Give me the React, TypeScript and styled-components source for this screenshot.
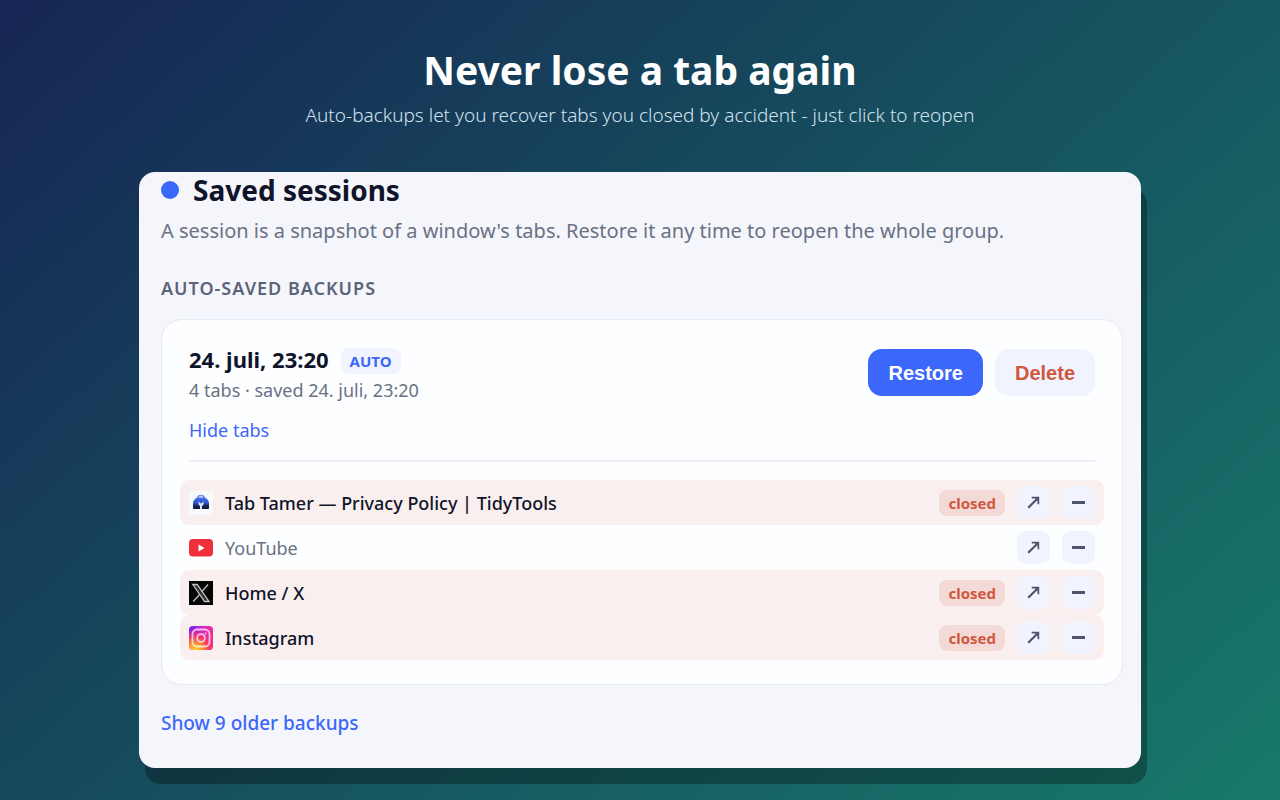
import React from 'react';
import styled, { createGlobalStyle, css } from 'styled-components';

const GlobalStyle = createGlobalStyle`
  * { box-sizing: border-box; }
  html { min-height: 100%; background: linear-gradient(138deg, #162554, #16505e 50%, #17796b) no-repeat; }
  body { margin: 0; color: #10142a; font-family: 'Segoe UI', 'Noto Sans', sans-serif; }
  h1, h2, h3, p, ul { margin: 0; padding: 0; }
  button { font: inherit; border: 0; cursor: pointer; }
`;

const Page = styled.div`
  display: flex;
  flex-direction: column;
  align-items: center;
  gap: 44px;
  padding: 43px 24px 32px;
`;

const Hero = styled.header`
  display: flex;
  flex-direction: column;
  align-items: center;
  gap: 5px;
  text-align: center;
`;

const HeroTitle = styled.h1`
  color: #fff;
  font-size: 39px;
  line-height: 54px;
  font-weight: 700;
`;

const HeroText = styled.p`
  color: #d2e2ee;
  font-size: 19px;
  line-height: 26px;
  font-weight: 300;
`;

const Panel = styled.main`
  width: 100%;
  max-width: 1002px;
  padding: 0 18px 31px 22px;
  border-radius: 16px;
  background: #f5f6fc;
  box-shadow: 6px 16px 0 rgba(0, 0, 0, 0.3);
`;

const PanelTitle = styled.h2`
  display: flex;
  align-items: center;
  gap: 14px;
  font-size: 28px;
  line-height: 36px;
  font-weight: 700;
`;

const Dot = styled.span`
  width: 18px;
  height: 18px;
  border-radius: 50%;
  background: #3b67fa;
`;

const Intro = styled.p`
  padding-top: 8px;
  color: #6a7183;
  font-size: 20px;
  line-height: 30px;
`;

const SectionLabel = styled.h3`
  padding: 30px 0 18px;
  color: #5b6478;
  font-size: 18px;
  line-height: 25px;
  font-weight: 600;
  letter-spacing: 1px;
  text-transform: uppercase;
`;

const Card = styled.section`
  padding: 28px 27px 24px;
  border: 1px solid #e6e8f4;
  border-radius: 21px;
  background: #fdfeff;
`;

const CardHead = styled.div`
  display: flex;
  justify-content: space-between;
  align-items: flex-start;
  padding-bottom: 16px;
  border-bottom: 2px solid #eceef3;
`;

const Summary = styled.div`
  display: flex;
  flex-direction: column;
  align-items: flex-start;
`;

const DateLine = styled.div`
  display: flex;
  align-items: flex-start;
  gap: 12px;
  font-size: 22px;
  line-height: 22px;
  font-weight: 700;
`;

const Badge = styled.span<{ $tone: 'blue' | 'red' }>`
  padding: 0 9px;
  border-radius: 8px;
  font-size: 15px;
  line-height: 26px;
  font-weight: 700;
  ${({ $tone }) =>
    $tone === 'blue'
      ? css`background: #f1f3fe; color: #3b67fa;`
      : css`background: #f3dad7; color: #d0573e;`}
`;

const Meta = styled.p`
  color: #6a7183;
  font-size: 18px;
  line-height: 32px;
`;

const LinkButton = styled.button<{ $strong?: boolean }>`
  padding: 0;
  background: none;
  color: #3b67fa;
  font-size: ${({ $strong }) => ($strong ? 19 : 18)}px;
  font-weight: ${({ $strong }) => ($strong ? 500 : 400)};
  line-height: 28px;
  margin-top: ${({ $strong }) => ($strong ? 24 : 10)}px;
`;

const Actions = styled.div`
  display: flex;
  gap: 12px;
  padding-top: 1px;
`;

const ActionButton = styled.button<{ $primary?: boolean }>`
  height: 47px;
  padding: 0 20px;
  border-radius: 14px;
  background: ${({ $primary }) => ($primary ? '#3b67fa' : '#f1f3fe')};
  color: ${({ $primary }) => ($primary ? '#fff' : '#d0573e')};
  font: 700 20px/24px 'Liberation Sans', Arial, sans-serif;
`;

const TabList = styled.ul`
  margin: 18px -9px 0;
  list-style: none;
`;

const TabRow = styled.li<{ $closed: boolean }>`
  display: flex;
  align-items: center;
  gap: 12px;
  height: 45px;
  padding: 0 9px;
  border-radius: 9px;
  background: ${({ $closed }) => ($closed ? '#f9efee' : 'transparent')};
  color: ${({ $closed }) => ($closed ? '#10142a' : '#6a7183')};
  font-size: 18px;
  font-weight: ${({ $closed }) => ($closed ? 500 : 400)};
`;

const TabName = styled.span`
  flex: 1;
  line-height: 26px;
`;

const IconButton = styled.button`
  display: grid;
  place-items: center;
  width: 33px;
  height: 33px;
  padding: 0;
  border-radius: 9px;
  background: #f1f3fe;
  color: #4c556b;
`;

const Favicon = styled.svg`
  width: 24px;
  height: 24px;
  flex: none;
`;

const TamerIcon = () => (
  <Favicon viewBox="0 0 24 24" aria-hidden="true">
    <defs>
      <linearGradient id="tamer" x1="0" y1="0" x2="0" y2="1">
        <stop offset="0" stopColor="#3f72ee" />
        <stop offset="0.5" stopColor="#2c50c0" />
        <stop offset="0.75" stopColor="#15234f" />
        <stop offset="1" stopColor="#0d1738" />
      </linearGradient>
    </defs>
    <rect width="24" height="24" fill="#f8f9fc" />
    <path d="M8.800 7a3.200 2.500 0 0 1 6.400 0" fill="none" stroke="#7393e4" strokeWidth="1.600" />
    <path d="M4 17v-4.500Q4 9 8 6.500h8Q20 9 20 12.500V17q0 1-1 1H5q-1 0-1-1z" fill="url(#tamer)" />
    <path d="M9.200 10.500l2.800 2 2.800-2-.6 3.500-1.200 1v3h-2v-3l-1.200-1z" fill="#dbe5fb" />
  </Favicon>
);

const YouTubeIcon = () => (
  <Favicon viewBox="0 0 24 24" aria-hidden="true">
    <rect y="3" width="24" height="17.500" rx="4" fill="#ef303c" />
    <path d="M9.500 8.500l6 3.500-6 3.500z" fill="#fff" />
  </Favicon>
);

const XIcon = () => (
  <Favicon viewBox="0 0 24 24" aria-hidden="true">
    <rect width="24" height="24" fill="#050505" />
    <path d="M3.800 3.500h4.400L20 20.500h-4.400z" fill="#333" stroke="#c4c4c4" strokeWidth="1.300" />
    <path d="M19 3.500l-6.300 7.200M10.800 13.300L4.300 20.500" stroke="#b5b5b5" strokeWidth="1.500" />
  </Favicon>
);

const InstagramIcon = () => (
  <Favicon viewBox="0 0 24 24" aria-hidden="true">
    <defs>
      <linearGradient id="ig-base" x1="0" y1="0" x2="1" y2="0.4">
        <stop offset="0" stopColor="#6a1cf5" />
        <stop offset="0.5" stopColor="#d52bc6" />
        <stop offset="1" stopColor="#f0308c" />
      </linearGradient>
      <radialGradient id="ig-glow" cx="0.25" cy="1.050" r="0.95">
        <stop offset="0" stopColor="#ffd531" />
        <stop offset="0.3" stopColor="#fca12f" />
        <stop offset="0.650" stopColor="#f8385a" stopOpacity="0.85" />
        <stop offset="1" stopColor="#e22bb0" stopOpacity="0" />
      </radialGradient>
    </defs>
    <rect width="24" height="24" rx="4" fill="url(#ig-base)" />
    <rect width="24" height="24" rx="4" fill="url(#ig-glow)" />
    <g fill="none" stroke="#fff" strokeOpacity="0.700" strokeWidth="1.800">
      <rect x="3.500" y="3.500" width="17" height="17" rx="4.500" />
      <circle cx="12" cy="12" r="3.900" />
    </g>
    <circle cx="16.600" cy="7.400" r="1" fill="#fff" fillOpacity="0.700" />
  </Favicon>
);

const OpenGlyph = () => (
  <svg width="13" height="13" viewBox="0 0 13 13" fill="none" aria-hidden="true">
    <path d="M1.200 11.800L9.800 3.200" stroke="currentColor" strokeWidth="2.200" />
    <path d="M4.500 .8h7.700v7.700l-1.700-.4V4.800L8.200 2.500H4.900z" fill="currentColor" />
  </svg>
);

const MinusGlyph = () => (
  <svg width="13" height="13" viewBox="0 0 13 13" aria-hidden="true">
    <path d="M0 5h13v3H0z" fill="currentColor" />
  </svg>
);

const tabs = [
  { name: 'Tab Tamer — Privacy Policy | TidyTools', closed: true, Icon: TamerIcon },
  { name: 'YouTube', closed: false, Icon: YouTubeIcon },
  { name: 'Home / X', closed: true, Icon: XIcon },
  { name: 'Instagram', closed: true, Icon: InstagramIcon },
];

export default function App() {
  return (
    <>
      <GlobalStyle />
      <Page>
        <Hero>
          <HeroTitle>Never lose a tab again</HeroTitle>
          <HeroText>Auto-backups let you recover tabs you closed by accident - just click to reopen</HeroText>
        </Hero>
        <Panel>
          <PanelTitle>
            <Dot />
            Saved sessions
          </PanelTitle>
          <Intro>A session is a snapshot of a window's tabs. Restore it any time to reopen the whole group.</Intro>
          <SectionLabel>Auto-saved backups</SectionLabel>
          <Card>
            <CardHead>
              <Summary>
                <DateLine>
                  24. juli, 23:20
                  <Badge $tone="blue">AUTO</Badge>
                </DateLine>
                <Meta>4 tabs · saved 24. juli, 23:20</Meta>
                <LinkButton type="button">Hide tabs</LinkButton>
              </Summary>
              <Actions>
                <ActionButton type="button" $primary>Restore</ActionButton>
                <ActionButton type="button">Delete</ActionButton>
              </Actions>
            </CardHead>
            <TabList>
              {tabs.map(({ name, closed, Icon }) => (
                <TabRow key={name} $closed={closed}>
                  <Icon />
                  <TabName>{name}</TabName>
                  {closed && <Badge $tone="red">closed</Badge>}
                  <IconButton type="button" aria-label={`Open ${name}`}>
                    <OpenGlyph />
                  </IconButton>
                  <IconButton type="button" aria-label={`Remove ${name}`}>
                    <MinusGlyph />
                  </IconButton>
                </TabRow>
              ))}
            </TabList>
          </Card>
          <LinkButton type="button" $strong>Show 9 older backups</LinkButton>
        </Panel>
      </Page>
    </>
  );
}
